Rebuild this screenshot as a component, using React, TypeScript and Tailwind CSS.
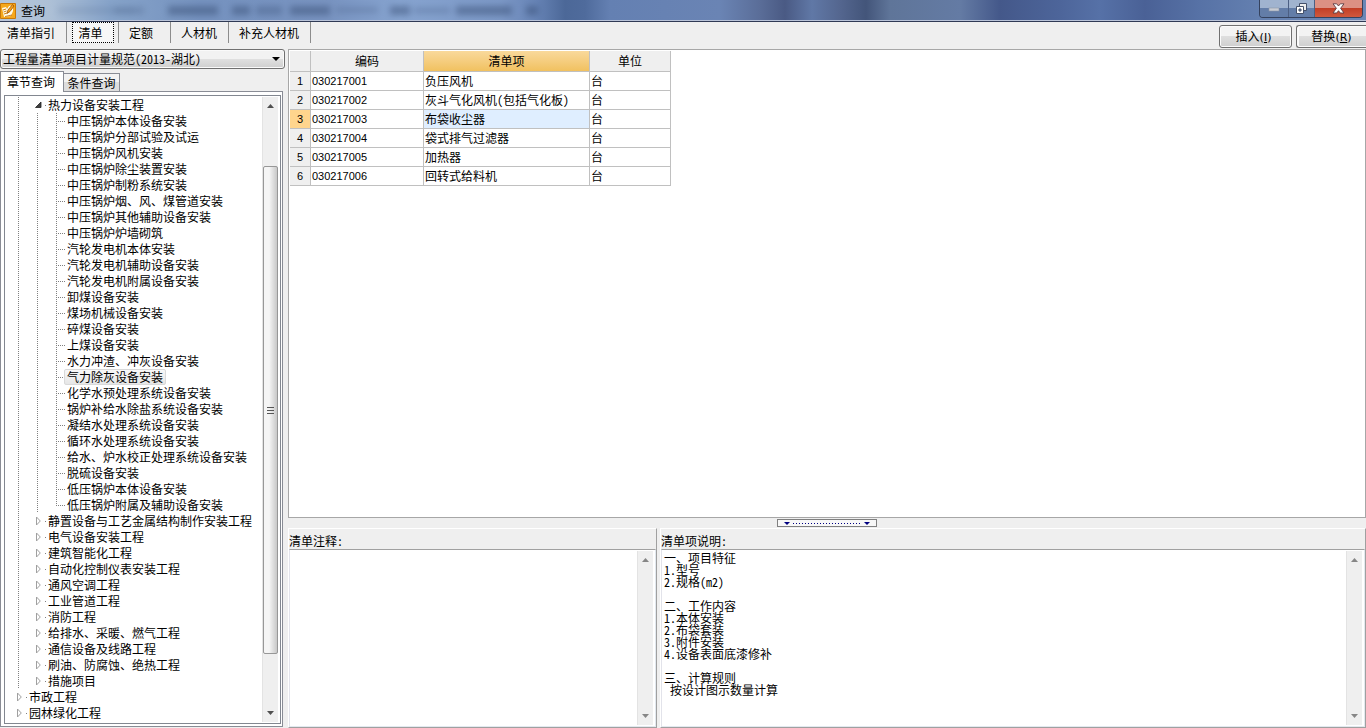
import React from "react";

const codes = [
  ["030217001", "负压风机", "台"],
  ["030217002", "灰斗气化风机(包括气化板)", "台"],
  ["030217003", "布袋收尘器", "台"],
  ["030217004", "袋式排气过滤器", "台"],
  ["030217005", "加热器", "台"],
  ["030217006", "回转式给料机", "台"],
];

const thermalItems = [
  "中压锅炉本体设备安装",
  "中压锅炉分部试验及试运",
  "中压锅炉风机安装",
  "中压锅炉除尘装置安装",
  "中压锅炉制粉系统安装",
  "中压锅炉烟、风、煤管道安装",
  "中压锅炉其他辅助设备安装",
  "中压锅炉炉墙砌筑",
  "汽轮发电机本体安装",
  "汽轮发电机辅助设备安装",
  "汽轮发电机附属设备安装",
  "卸煤设备安装",
  "煤场机械设备安装",
  "碎煤设备安装",
  "上煤设备安装",
  "水力冲渣、冲灰设备安装",
  "气力除灰设备安装",
  "化学水预处理系统设备安装",
  "锅炉补给水除盐系统设备安装",
  "凝结水处理系统设备安装",
  "循环水处理系统设备安装",
  "给水、炉水校正处理系统设备安装",
  "脱硫设备安装",
  "低压锅炉本体设备安装",
  "低压锅炉附属及辅助设备安装",
];

const chapters = [
  "静置设备与工艺金属结构制作安装工程",
  "电气设备安装工程",
  "建筑智能化工程",
  "自动化控制仪表安装工程",
  "通风空调工程",
  "工业管道工程",
  "消防工程",
  "给排水、采暖、燃气工程",
  "通信设备及线路工程",
  "刷油、防腐蚀、绝热工程",
  "措施项目",
];

const description = `一、项目特征
1.型号
2.规格(m2)

二、工作内容
1.本体安装
2.布袋套装
3.附件安装
4.设备表面底漆修补

三、计算规则
 按设计图示数量计算`;

function Guide() {
  return (
    <span className="flex w-[19px] shrink-0 self-stretch pl-[9px]">
      <span className="w-px bg-[repeating-linear-gradient(180deg,#808080_0px_1px,transparent_1px_2px)]" />
    </span>
  );
}

function Branch({ last }: { last: boolean }) {
  return (
    <span className="flex w-[19px] shrink-0 self-stretch pl-[9px]">
      <span className={last ? "h-[9px] w-px bg-[repeating-linear-gradient(180deg,#808080_0px_1px,transparent_1px_2px)]" : "h-4 w-px bg-[repeating-linear-gradient(180deg,#808080_0px_1px,transparent_1px_2px)]"} />
      <span className="mt-2 h-px w-2 bg-[repeating-linear-gradient(90deg,transparent_0px_1px,#808080_1px_2px)]" />
    </span>
  );
}

function Expander({ open }: { open?: boolean }) {
  return (
    <span className="flex w-[19px] shrink-0 items-center pl-[7px]">
      <svg width="12" height="10" viewBox="0 0 12 10" aria-hidden="true">
        {open ? (
          <path d="M6 2 L6 7.5 L0.5 7.5 Z" fill="#404040" stroke="#222" strokeWidth="0.8" />
        ) : (
          <path d="M1.5 1 L5.3 5 L1.5 9 Z" fill="#fff" stroke="#a0a0a0" strokeWidth="1" />
        )}
        <rect x="10" y="5" width="1" height="1" fill="#808080" />
      </svg>
    </span>
  );
}

function Arrow({ up, muted }: { up?: boolean; muted?: boolean }) {
  return (
    <span className="flex h-[18px] shrink-0 items-center justify-center">
      <svg width="7" height="4" viewBox="0 0 7 4" aria-hidden="true">
        <path d={up ? "M0 4 L3.5 0 L7 4 Z" : "M0 0 L7 0 L3.5 4 Z"} fill={muted ? "#868686" : "#505050"} />
      </svg>
    </span>
  );
}

function Rail({ children, muted }: { children?: React.ReactNode; muted?: boolean }) {
  return (
    <div className="flex w-4 shrink-0 flex-col border-l border-[#e3e3e3] bg-[#efefef]">
      <Arrow up muted={muted} />
      <div className="flex min-h-0 flex-1 flex-col">{children}</div>
      <Arrow muted={muted} />
    </div>
  );
}

function TreeRow({ children, level }: { children: React.ReactNode; level: number }) {
  return (
    <li role="treeitem" aria-level={level} className="flex h-4 items-center whitespace-nowrap">
      {children}
    </li>
  );
}

function TitleBar() {
  return (
    <header className="relative flex h-[22px] shrink-0 items-center overflow-hidden border-b border-[#303a55] bg-[linear-gradient(90deg,#b4c6d9_0px,#adc0d6_50px,#86a3c9_110px,#7592bf_200px,#7893c0_330px,#86a3cf_400px,#7c98c6_500px,#6784b6_535px,#4c6898_565px,#4f6b9c_585px,#6480b2_610px,#6a84b4_720px,#5a6d98_760px,#4a5a84_785px,#6078a6_812px,#54668f_840px,#43557a_866px,#5f7599_890px,#647ba4_960px,#44588a_1000px,#4d659a_1060px,#5671a7_1100px,#4a6196_1145px,#5772a6_1200px,#6480b0_1260px,#6b87b6_100%)] shadow-[inset_0_-1px_0_#b9c3d8]">
      <svg className="absolute left-0 top-0 h-5 w-[600px]" aria-hidden="true">
        <g fill="#33496f" opacity="0.45" className="blur-[3px]">
          <rect x="58" y="7" width="76" height="7" opacity="0.3" />
          <rect x="114" y="7" width="30" height="7" opacity="0.5" />
          <rect x="168" y="6" width="50" height="9" />
          <rect x="232" y="6" width="18" height="9" />
          <rect x="256" y="6" width="26" height="9" opacity="0.7" />
          <rect x="290" y="6" width="40" height="9" />
          <rect x="336" y="7" width="42" height="6" opacity="0.5" />
          <rect x="390" y="6" width="20" height="9" />
          <rect x="414" y="8" width="36" height="5" opacity="0.6" />
          <rect x="456" y="6" width="56" height="9" />
          <rect x="526" y="6" width="12" height="9" />
        </g>
      </svg>
      <svg className="relative mt-px shrink-0" width="16" height="16" viewBox="0 0 16 16" aria-hidden="true">
        <rect width="16" height="16" rx="1" fill="#c87808" />
        <rect x="1" y="1" width="14" height="14" fill="#f5a81c" />
        <path d="M2 5 L6 4 L7 6 L9 3 L13 2 L13 8 L11 13 L4 14 Z" fill="#fffbe8" />
        <path d="M3 7l3-1M3.500 9l3-1M4 11l3-1" stroke="#d48410" fill="none" />
        <path d="M12.500 1.500 L8 7 L7 10.500 L10 8.500 L14 3 Z" fill="#f2a21e" stroke="#a35300" strokeWidth="0.8" />
        <path d="M5 13.500 L12 12" stroke="#b86505" strokeWidth="0.8" />
      </svg>
      <h1 className="relative pl-[5px] text-xs leading-5">查询</h1>
      <div className="relative mr-[3px] ml-auto flex h-[18px] self-start overflow-hidden rounded-b border border-t-0 border-[#35425e]">
        <button aria-label="最小化" className="flex w-[29px] items-center justify-center border-r border-[#4c5f83] bg-linear-to-b from-[#a0b3cf] from-50% to-[#637da8] to-50%">
          <svg width="12" height="6" viewBox="0 0 12 6"><rect x="1" y="2" width="10" height="3" fill="#c8ccd4" stroke="#8a94a6" strokeWidth="0.6" /></svg>
        </button>
        <button aria-label="还原" className="flex w-[26px] items-center justify-center border-r border-[#4c5f83] bg-linear-to-b from-[#a0b3cf] from-50% to-[#637da8] to-50%">
          <svg width="13" height="13" viewBox="0 0 13 13">
            <path d="M4.5 1.5h7v7h-7z" fill="#eee" stroke="#44506a" />
            <path d="M1.5 4.5h7v7h-7z" fill="#fff" stroke="#44506a" />
            <path d="M4 7h2v2H4z" fill="#7088ad" stroke="#44506a" />
          </svg>
        </button>
        <button aria-label="关闭" className="flex w-[47px] items-center justify-center bg-linear-to-b from-[#dc9184] from-45% via-[#c13c24] via-45% to-[#d0583d]">
          <svg width="13" height="11" viewBox="0 0 13 11">
            <path d="M1 .8h3.7L6.5 3 8.3.8H12L8.6 5.3 12 10H8.3L6.5 7.7 4.700 10H1L4.400 5.3Z" fill="#fff" stroke="#5c3b42" strokeWidth="0.9" />
          </svg>
        </button>
      </div>
    </header>
  );
}

function Toolbar() {
  return (
    <nav className="flex h-[27px] shrink-0">
      <button className="h-[21px] w-[67px] border-r border-[#8c8c8c] pl-[7px] text-left">清单指引</button>
      <div className="flex h-[21px] w-[52px] justify-center border-r border-[#8c8c8c]">
        <button aria-pressed="true" className="w-[42px] border border-dotted border-black bg-[#f7f7f7] pr-1">清单</button>
      </div>
      <button className="h-[21px] w-[52px] border-r border-[#8c8c8c] pl-[10px] text-left">定额</button>
      <button className="h-[21px] w-[58px] border-r border-[#8c8c8c] pl-[10px] text-left">人材机</button>
      <button className="h-[21px] w-[82px] border-r border-[#8c8c8c] pl-[10px] text-left">补充人材机</button>
      <div className="ml-auto flex gap-1 pt-[3px]">
        <button className="h-[23px] w-[73px] rounded-[3px] border border-[#707070] bg-linear-to-b from-[#f3f3f3] from-50% via-[#dedede] via-50% to-[#cfcfcf] pr-1 shadow-[inset_0_0_0_1px_#fbfbfb]">
          插入<span className="font-['DejaVu_Sans',sans-serif] text-[11px]">(<u>I</u>)</span>
        </button>
        <button className="h-[23px] w-[70px] rounded-l-[3px] border border-r-0 border-[#707070] bg-linear-to-b from-[#f3f3f3] from-50% via-[#dedede] via-50% to-[#cfcfcf] shadow-[inset_1px_0_0_1px_#fbfbfb]">
          替换<span className="font-['DejaVu_Sans',sans-serif] text-[11px]">(<u>R</u>)</span>
        </button>
      </div>
    </nav>
  );
}

function Sidebar() {
  return (
    <aside className="flex w-[285px] shrink-0 flex-col pb-px">
      <div className="flex h-5 shrink-0 items-center rounded-[3px] border border-[#707070] bg-linear-to-b from-[#f2f2f2] from-50% via-[#e0e0e0] via-50% to-[#cfcfcf] pr-1 shadow-[inset_0_0_0_1px_#fafafa]">
        <select aria-label="计量规范" className="h-4 min-w-0 flex-1 appearance-none bg-transparent pl-[2px] outline-none">
          <option>工程量清单项目计量规范(2013-湖北)</option>
        </select>
        <svg width="8" height="4" viewBox="0 0 8 4" aria-hidden="true"><path d="M0 0h8L4 4Z" fill="#000" /></svg>
      </div>
      <div role="tablist" className="flex h-[22px] shrink-0 items-end pt-[2px]">
        <button role="tab" aria-selected="true" className="z-10 -mb-px h-[21px] w-16 border border-b-0 border-[#898c95] bg-white pr-[2px]">章节查询</button>
        <button role="tab" aria-selected="false" className="h-[18px] w-14 border border-l-0 border-b-0 border-[#898c95] bg-linear-to-b from-[#f2f2f2] from-50% to-[#dddddd] to-50%">条件查询</button>
      </div>
      <div className="mr-[2px] flex min-h-0 flex-1 border border-[#898c95] bg-white p-[3px] pr-px pb-[2px]">
        <div className="flex min-w-0 flex-1 border border-[#828790] p-px pr-[2px]">
          <ul role="tree" className="min-w-0 flex-1 overflow-hidden pl-[3px]">
            <TreeRow level={2}><Guide /><Expander open /><span className="pl-px">热力设备安装工程</span></TreeRow>
            {thermalItems.map((item, i) => (
              <TreeRow level={3} key={item}>
                <Guide />
                <Guide />
                <Branch last={i === thermalItems.length - 1} />
                {item === "气力除灰设备安装" ? (
                  <span className="-ml-[2px] rounded-[2px] border border-[#d9d9d9] bg-linear-to-b from-[#f8f8f8] to-[#e6e6e6] px-[2px] leading-[14px]">{item}</span>
                ) : (
                  <span className="pl-px">{item}</span>
                )}
              </TreeRow>
            ))}
            {chapters.map((item) => (
              <TreeRow level={2} key={item}><Guide /><Expander /><span className="pl-px">{item}</span></TreeRow>
            ))}
            <TreeRow level={1}><Expander /><span className="pl-px">市政工程</span></TreeRow>
            <TreeRow level={1}><Expander /><span className="pl-px">园林绿化工程</span></TreeRow>
          </ul>
          <Rail>
            <div className="flex-[51]" />
            <div className="flex flex-[488] flex-col items-center justify-center gap-[2px] rounded-[2px] border border-[#979797] bg-linear-to-r from-[#f5f5f5] from-40% to-[#c8c8c8]">
              <span className="h-px w-[7px] bg-[#555]" />
              <span className="h-px w-[7px] bg-[#555]" />
              <span className="h-px w-[7px] bg-[#555]" />
            </div>
            <div className="flex-[50]" />
          </Rail>
        </div>
      </div>
    </aside>
  );
}

function ItemTable() {
  const cell = "border-r border-b border-[#c0c0c0] pl-px text-left font-normal";
  return (
    <section className="min-h-0 flex-1 overflow-hidden border border-[#a7a7a7] bg-white pt-px pl-px">
      <table className="w-[381px] table-fixed border-separate border-spacing-0">
        <colgroup>
          <col className="w-[21px]" />
          <col className="w-[113px]" />
          <col className="w-[166px]" />
          <col className="w-[81px]" />
        </colgroup>
        <thead>
          <tr className="h-[21px] bg-[#efefef]">
            <th className="border-r border-b border-[#c0c0c0]" />
            <th className="border-r border-b border-[#c0c0c0] font-normal">编码</th>
            <th className="border-r border-b border-[#c0c0c0] bg-linear-to-b from-[#f9d99b] to-[#f1c15f] font-normal">清单项</th>
            <th className="border-r border-b border-[#c0c0c0] font-normal">单位</th>
          </tr>
        </thead>
        <tbody>
          {codes.map(([code, name, unit], i) => (
            <tr key={code} className="h-[19px]">
              <th scope="row" className={i === 2 ? "border-r border-b border-[#c0c0c0] bg-[#ffd58d] font-['Liberation_Sans',sans-serif] text-[11px] font-normal" : "border-r border-b border-[#c0c0c0] bg-[#efefef] font-['Liberation_Sans',sans-serif] text-[11px] font-normal"}>{i + 1}</th>
              <td className="border-r border-b border-[#c0c0c0] pl-px font-['Liberation_Sans',sans-serif] text-[11px]">{code}</td>
              <td className={i === 2 ? "border-r border-b border-[#c0c0c0] bg-[#dfeeff] pl-px" : cell}>{name}</td>
              <td className={cell}>{unit}</td>
            </tr>
          ))}
        </tbody>
      </table>
    </section>
  );
}

function NotePanel({ id, label, text, className }: { id: string; label: string; text: string; className: string }) {
  return (
    <section className={className}>
      <label htmlFor={id} className="flex h-5 shrink-0 items-end leading-4">{label}</label>
      <div className="flex min-h-0 flex-1 border border-t-[#a0a0a0] border-r-[#e3e9ef] border-b-[#e3e9ef] border-l-[#e2e3ea] bg-white pt-px pr-[2px] pb-px">
        <textarea id={id} readOnly defaultValue={text} className="min-w-0 flex-1 resize-none overflow-hidden bg-white pt-px pl-[2px] leading-3 outline-none" />
        <Rail muted />
      </div>
    </section>
  );
}

export default function App() {
  return (
    <div className="flex h-screen flex-col overflow-hidden bg-[#efefef] font-['Noto_Sans_Mono_CJK_SC','Noto_Sans_CJK_SC',monospace] text-xs leading-4 text-black">
      <TitleBar />
      <Toolbar />
      <div className="flex min-h-0 flex-1">
        <Sidebar />
        <main className="flex min-w-0 flex-1 flex-col pl-[3px]">
          <ItemTable />
          <div className="flex h-[10px] shrink-0 items-center justify-center">
            <button aria-label="折叠面板" className="flex h-2 w-[100px] items-center justify-between border border-[#808080] bg-[#f7f7f7] px-[6px]">
              <svg width="6" height="3" viewBox="0 0 6 3"><path d="M0 0h6L3 3Z" fill="#000080" /></svg>
              <span className="h-px w-[68px] bg-[repeating-linear-gradient(90deg,#000080_0px_1px,transparent_1px_3px)]" />
              <svg width="6" height="3" viewBox="0 0 6 3"><path d="M0 0h6L3 3Z" fill="#000080" /></svg>
            </button>
          </div>
          <div className="flex h-[200px] shrink-0 gap-[3px]">
            <NotePanel id="notes" label="清单注释:" text="" className="flex w-[369px] flex-col border border-t-white border-r-[#a0a0a0] border-b-[#a0a0a0] border-l-white" />
            <NotePanel id="details" label="清单项说明:" text={description} className="flex min-w-0 flex-1 flex-col border border-t-white border-r-[#a0a0a0] border-b-[#a0a0a0] border-l-white" />
          </div>
        </main>
      </div>
    </div>
  );
}
